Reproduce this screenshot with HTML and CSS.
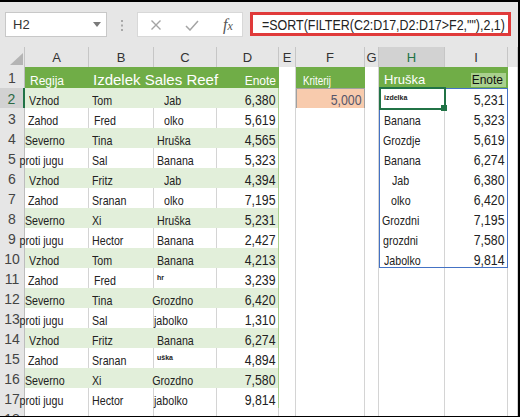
FILE: index.html
```html
<!DOCTYPE html>
<html>
<head>
<meta charset="utf-8">
<link rel="stylesheet" href="styles.css">
</head>
<body>
<div class="window">
  <div class="fbar">
    <div class="namebox"><span>H2</span><span class="caret"></span></div>
    <svg class="grip" width="2" height="11" viewBox="0 0 2 11"><rect x="0" y="0" width="2" height="2" fill="#a8a8a8"/><rect x="0" y="4.5" width="2" height="2" fill="#a8a8a8"/><rect x="0" y="9" width="2" height="2" fill="#a8a8a8"/></svg>
    <div class="fnbox">
      <span class="slot"><svg width="10" height="10" viewBox="0 0 10 10"><path d="M0.5 0.5 L9.5 9.5 M9.5 0.5 L0.5 9.5" stroke="#a4a4a4" stroke-width="1.4" fill="none"/></svg></span>
      <span class="slot"><svg width="14" height="11" viewBox="0 0 14 11"><path d="M1 6 L5 10 L13 1" stroke="#a4a4a4" stroke-width="1.5" fill="none"/></svg></span>
      <span class="slot fxslot"><span class="fx">f<span class="fxx">x</span></span></span>
    </div>
    <div class="formula"><span class="sq">=SORT(FILTER(C2:D17,D2:D17&gt;F2,""),2,1)</span></div>
  </div>

  <div class="sheet">
    <div class="row hdr">
      <div class="corner"><svg width="25" height="20" viewBox="0 0 25 20"><path d="M23 6 L23 18 L10 18 Z" fill="#b4b4b4"/></svg></div>
      <div class="ch">A</div><div class="ch">B</div><div class="ch">C</div><div class="ch">D</div><div class="ch">E</div><div class="ch">F</div><div class="ch">G</div><div class="ch on">H</div><div class="ch">I</div><div class="ch"></div>
    </div>

    <div class="row r1">
      <div class="rh">1</div>
      <div class="c gh h12 p5"><span class="t">Regija</span></div>
      <div class="c gh title p4"><span class="t">Izdelek Sales Reef</span></div>
      <div class="c gh"></div>
      <div class="c gh h12 right"><span class="t">Enote</span></div>
      <div class="c"></div>
      <div class="c gh h12 p7"><span class="sq">Kriterij</span></div>
      <div class="c"></div>
      <div class="c gh h13 p5"><span class="t">Hruška</span></div>
      <div class="c gh badgecell"><span class="badge">Enote</span></div>
      <div class="c"></div>
    </div>

    <div class="row g">
      <div class="rh on">2</div>
      <div class="c tb p4"><span class="sq">Vzhod</span></div>
      <div class="c tb p3"><span class="sq">Tom</span></div>
      <div class="c tb p10"><span class="sq">Jab</span></div>
      <div class="c tb d n"><span class="sq">6,380</span></div>
      <div class="c"></div>
      <div class="c crit n"><span class="sq">5,000</span></div>
      <div class="c"></div>
      <div class="c tiny p5"><span class="t">izdelka</span></div>
      <div class="c n2"><span class="sq">5,231</span></div>
      <div class="c"></div>
    </div>

    <div class="row">
      <div class="rh">3</div>
      <div class="c tb p3"><span class="sq">Zahod</span></div>
      <div class="c tb p5"><span class="sq">Fred</span></div>
      <div class="c tb p10"><span class="sq">olko</span></div>
      <div class="c tb d n"><span class="sq">5,619</span></div>
      <div class="c"></div>
      <div class="c"></div>
      <div class="c"></div>
      <div class="c p5"><span class="sq">Banana</span></div>
      <div class="c n2"><span class="sq">5,323</span></div>
      <div class="c"></div>
    </div>

    <div class="row g">
      <div class="rh">4</div>
      <div class="c tb p0"><span class="sq">Severno</span></div>
      <div class="c tb p3"><span class="sq">Tina</span></div>
      <div class="c tb p3"><span class="sq">Hruška</span></div>
      <div class="c tb d n"><span class="sq">4,565</span></div>
      <div class="c"></div>
      <div class="c"></div>
      <div class="c"></div>
      <div class="c p4"><span class="sq">Grozdje</span></div>
      <div class="c n2"><span class="sq">5,619</span></div>
      <div class="c"></div>
    </div>

    <div class="row">
      <div class="rh">5</div>
      <div class="c tb pm3"><span class="sq">proti jugu</span></div>
      <div class="c tb p3"><span class="sq">Sal</span></div>
      <div class="c tb p3"><span class="sq">Banana</span></div>
      <div class="c tb d n"><span class="sq">5,323</span></div>
      <div class="c"></div>
      <div class="c"></div>
      <div class="c"></div>
      <div class="c p5"><span class="sq">Banana</span></div>
      <div class="c n2"><span class="sq">6,274</span></div>
      <div class="c"></div>
    </div>

    <div class="row g">
      <div class="rh">6</div>
      <div class="c tb p4"><span class="sq">Vzhod</span></div>
      <div class="c tb p3"><span class="sq">Fritz</span></div>
      <div class="c tb p10"><span class="sq">Jab</span></div>
      <div class="c tb d n"><span class="sq">4,394</span></div>
      <div class="c"></div>
      <div class="c"></div>
      <div class="c"></div>
      <div class="c p13"><span class="sq">Jab</span></div>
      <div class="c n2"><span class="sq">6,380</span></div>
      <div class="c"></div>
    </div>

    <div class="row">
      <div class="rh">7</div>
      <div class="c tb p3"><span class="sq">Zahod</span></div>
      <div class="c tb p3"><span class="sq">Sranan</span></div>
      <div class="c tb p10"><span class="sq">olko</span></div>
      <div class="c tb d n"><span class="sq">7,195</span></div>
      <div class="c"></div>
      <div class="c"></div>
      <div class="c"></div>
      <div class="c p12"><span class="sq">olko</span></div>
      <div class="c n2"><span class="sq">6,420</span></div>
      <div class="c"></div>
    </div>

    <div class="row g">
      <div class="rh">8</div>
      <div class="c tb p0"><span class="sq">Severno</span></div>
      <div class="c tb p3"><span class="sq">Xi</span></div>
      <div class="c tb p3"><span class="sq">Hruška</span></div>
      <div class="c tb d n"><span class="sq">5,231</span></div>
      <div class="c"></div>
      <div class="c"></div>
      <div class="c"></div>
      <div class="c p3"><span class="sq">Grozdni</span></div>
      <div class="c n2"><span class="sq">7,195</span></div>
      <div class="c"></div>
    </div>

    <div class="row">
      <div class="rh">9</div>
      <div class="c tb pm3"><span class="sq">proti jugu</span></div>
      <div class="c tb p3"><span class="sq">Hector</span></div>
      <div class="c tb p3"><span class="sq">Banana</span></div>
      <div class="c tb d n"><span class="sq">2,427</span></div>
      <div class="c"></div>
      <div class="c"></div>
      <div class="c"></div>
      <div class="c p4"><span class="sq">grozdni</span></div>
      <div class="c n2"><span class="sq">7,580</span></div>
      <div class="c"></div>
    </div>

    <div class="row g">
      <div class="rh">10</div>
      <div class="c tb p4"><span class="sq">Vzhod</span></div>
      <div class="c tb p3"><span class="sq">Tom</span></div>
      <div class="c tb p3"><span class="sq">Banana</span></div>
      <div class="c tb d n"><span class="sq">4,213</span></div>
      <div class="c"></div>
      <div class="c"></div>
      <div class="c"></div>
      <div class="c p5"><span class="sq">Jabolko</span></div>
      <div class="c n2"><span class="sq">9,814</span></div>
      <div class="c"></div>
    </div>

    <div class="row">
      <div class="rh">11</div>
      <div class="c tb p3"><span class="sq">Zahod</span></div>
      <div class="c tb p5"><span class="sq">Fred</span></div>
      <div class="c tb tiny p3"><span class="t">hr</span></div>
      <div class="c tb d n"><span class="sq">3,239</span></div>
      <div class="c"></div><div class="c"></div><div class="c"></div><div class="c"></div><div class="c"></div><div class="c"></div>
    </div>

    <div class="row g">
      <div class="rh">12</div>
      <div class="c tb p0"><span class="sq">Severno</span></div>
      <div class="c tb p3"><span class="sq">Tina</span></div>
      <div class="c tb pm1"><span class="sq">Grozdno</span></div>
      <div class="c tb d n"><span class="sq">6,420</span></div>
      <div class="c"></div><div class="c"></div><div class="c"></div><div class="c"></div><div class="c"></div><div class="c"></div>
    </div>

    <div class="row">
      <div class="rh">13</div>
      <div class="c tb pm3"><span class="sq">proti jugu</span></div>
      <div class="c tb p3"><span class="sq">Sal</span></div>
      <div class="c tb p0"><span class="sq">jabolko</span></div>
      <div class="c tb d n"><span class="sq">1,310</span></div>
      <div class="c"></div><div class="c"></div><div class="c"></div><div class="c"></div><div class="c"></div><div class="c"></div>
    </div>

    <div class="row g">
      <div class="rh">14</div>
      <div class="c tb p4"><span class="sq">Vzhod</span></div>
      <div class="c tb p3"><span class="sq">Fritz</span></div>
      <div class="c tb p3"><span class="sq">Banana</span></div>
      <div class="c tb d n"><span class="sq">6,274</span></div>
      <div class="c"></div><div class="c"></div><div class="c"></div><div class="c"></div><div class="c"></div><div class="c"></div>
    </div>

    <div class="row">
      <div class="rh">15</div>
      <div class="c tb p3"><span class="sq">Zahod</span></div>
      <div class="c tb p3"><span class="sq">Sranan</span></div>
      <div class="c tb tiny p3"><span class="t">uška</span></div>
      <div class="c tb d n"><span class="sq">4,894</span></div>
      <div class="c"></div><div class="c"></div><div class="c"></div><div class="c"></div><div class="c"></div><div class="c"></div>
    </div>

    <div class="row g">
      <div class="rh">16</div>
      <div class="c tb p0"><span class="sq">Severno</span></div>
      <div class="c tb p3"><span class="sq">Xi</span></div>
      <div class="c tb pm1"><span class="sq">Grozdno</span></div>
      <div class="c tb d n"><span class="sq">7,580</span></div>
      <div class="c"></div><div class="c"></div><div class="c"></div><div class="c"></div><div class="c"></div><div class="c"></div>
    </div>

    <div class="row">
      <div class="rh">17</div>
      <div class="c tb pm3"><span class="sq">proti jugu</span></div>
      <div class="c tb p3"><span class="sq">Hector</span></div>
      <div class="c tb p0"><span class="sq">jabolko</span></div>
      <div class="c tb d n"><span class="sq">9,814</span></div>
      <div class="c"></div><div class="c"></div><div class="c"></div><div class="c"></div><div class="c"></div><div class="c"></div>
    </div>

    <div class="row">
      <div class="rh">18</div>
      <div class="c"></div><div class="c"></div><div class="c"></div><div class="c"></div><div class="c"></div><div class="c"></div><div class="c"></div><div class="c"></div><div class="c"></div><div class="c"></div>
    </div>

    <div class="spill"></div>
    <div class="sel"><span class="handle"></span></div>
  </div>
</div>
</body>
</html>
```

FILE: styles.css
```css
* { box-sizing: border-box; }
html, body { margin: 0; padding: 0; }
body {
  width: 520px;
  height: 417px;
  overflow: hidden;
  background: #fff;
  font-family: "Liberation Sans", Arial, sans-serif;
}
.window {
  width: 520px;
  height: 417px;
  border-top: 2px solid #000;
  border-right: 2px solid #000;
  border-bottom: 1px solid #000;
  background: #e6e6e6;
  overflow: hidden;
  display: flex;
  flex-direction: column;
}

/* squeezed (narrow) text */
.sq {
  display: inline-block;
  position: relative;
  transform: scaleX(0.82);
  transform-origin: left center;
}
.n .sq, .n2 .sq { transform-origin: right center; }

/* formula bar */
.fbar {
  height: 45px;
  flex: none;
  display: flex;
  align-items: flex-start;
  padding: 10px 0 0 5px;
}
.namebox {
  width: 102px;
  height: 25px;
  background: #fff;
  border: 1px solid #c8c8c8;
  display: flex;
  align-items: center;
  justify-content: space-between;
  padding: 0 5px 0 7px;
  font-size: 13px;
  color: #333;
}
.caret {
  width: 0;
  height: 0;
  border-left: 4px solid transparent;
  border-right: 4px solid transparent;
  border-top: 5px solid #7a7a7a;
}
.grip { margin: 8px 14px 0 14px; flex: none; }
.fnbox {
  width: 106px;
  height: 25px;
  background: #fff;
  border: 1px solid #d8d8d8;
  display: flex;
  align-items: center;
}
.slot {
  width: 36px;
  display: flex;
  justify-content: center;
  align-items: center;
  padding-top: 1px;
}
.fxslot { width: 32px; padding-left: 4px; }
.fx {
  font-family: "Liberation Serif", serif;
  font-style: italic;
  font-size: 16px;
  color: #555;
  line-height: 16px;
}
.fxx { font-size: 12px; }
.formula {
  margin-left: 7px;
  width: 261px;
  height: 24px;
  border: 3px solid #e03a3a;
  background: #fff;
  padding: 1px 0 0 9px;
  font-size: 15px;
  line-height: 18px;
  color: #222;
  white-space: nowrap;
  overflow: hidden;
}
.formula .sq { transform: scaleX(0.83); }

/* sheet */
.sheet {
  position: relative;
  flex: 1;
  background: #fff;
}
.row {
  display: grid;
  grid-template-columns: 25px 64px 65px 63px 62px 17px 69px 14px 66px 63px 10px;
  height: 20px;
}
.row.r1 { height: 21px; }

.corner {
  background: #e6e6e6;
  border-right: 1px solid #c4c4c4;
  border-bottom: 1px solid #bdbdbd;
}
.corner svg { display: block; }
.ch {
  background: #e6e6e6;
  border-right: 1px solid #c6c6c6;
  border-bottom: 1px solid #bdbdbd;
  text-align: center;
  font-size: 13px;
  line-height: 21px;
  color: #333;
}
.ch.on {
  background: #d2d2d2;
  border-bottom: 2px solid #217346;
  color: #217346;
}
.rh {
  background: #e6e6e6;
  border-right: 1px solid #bdbdbd;
  border-bottom: 1px solid #d2d2d2;
  text-align: center;
  font-size: 14px;
  line-height: 22px;
  color: #444;
  white-space: nowrap;
  overflow: hidden;
}
.rh.on {
  background: #d2d2d2;
  border-right: 2px solid #217346;
  color: #2c6a44;
}

.c {
  min-width: 0;
  background: #fff;
  border-right: 1px solid #d4d4d4;
  border-bottom: 1px solid #d4d4d4;
  white-space: nowrap;
  font-size: 13px;
  line-height: 25px;
  color: #222;
  padding-left: 3px;
}
.t { position: relative; }

/* table A:D */
.tb { border-bottom-color: #a9d08e; }
.g .tb { background: #e2efda; border-right-color: #e2efda; }
.tb.d, .g .tb.d { border-right-color: #a9d08e; }

.n, .n2 {
  font-size: 15px;
  line-height: 24px;
  text-align: right;
  padding-left: 0;
  padding-right: 2px;
}

/* row 1 headers */
.gh {
  background: #70ad47;
  border-right-color: #70ad47;
  border-bottom-color: #70ad47;
  color: #fff;
}
.h12 { font-size: 12px; line-height: 28px; }
.h13 { font-size: 13px; line-height: 26px; }
.title { font-size: 15px; line-height: 26px; }
.right { text-align: right; padding-left: 0; padding-right: 2px; }
.badgecell {
  display: flex;
  justify-content: flex-end;
  align-items: flex-start;
  padding: 6px 1px 0 0;
}
.badge {
  background: #a9d08e;
  color: #111;
  font-size: 12px;
  line-height: 13px;
  padding: 1px 3px 0 1px;
}

/* criterion */
.crit {
  background: #f8cbad;
  border: 1px solid #a0a0a0;
  color: #55556a;
  padding-right: 2px;
  line-height: 22px;
}

.tiny {
  font-size: 7px;
  font-weight: bold;
  line-height: 20px;
}

.p0 { padding-left: 0; }
.p3 { padding-left: 3px; }
.p4 { padding-left: 4px; }
.p5 { padding-left: 5px; }
.p7 { padding-left: 7px; }
.p10 { padding-left: 10px; }
.p12 { padding-left: 12px; }
.p13 { padding-left: 13px; }
.pm1 { padding-left: 0; text-indent: -1px; }
.pm3 { padding-left: 0; text-indent: -3px; }

/* overlays */
.spill {
  position: absolute;
  left: 379px;
  top: 41px;
  width: 129px;
  height: 180px;
  border: 1px solid #4472c4;
}
.sel {
  position: absolute;
  left: 379px;
  top: 40px;
  width: 67px;
  height: 23px;
  border: 2px solid #217346;
}
.handle {
  position: absolute;
  right: -3px;
  bottom: -3px;
  width: 6px;
  height: 6px;
  background: #217346;
}
```
